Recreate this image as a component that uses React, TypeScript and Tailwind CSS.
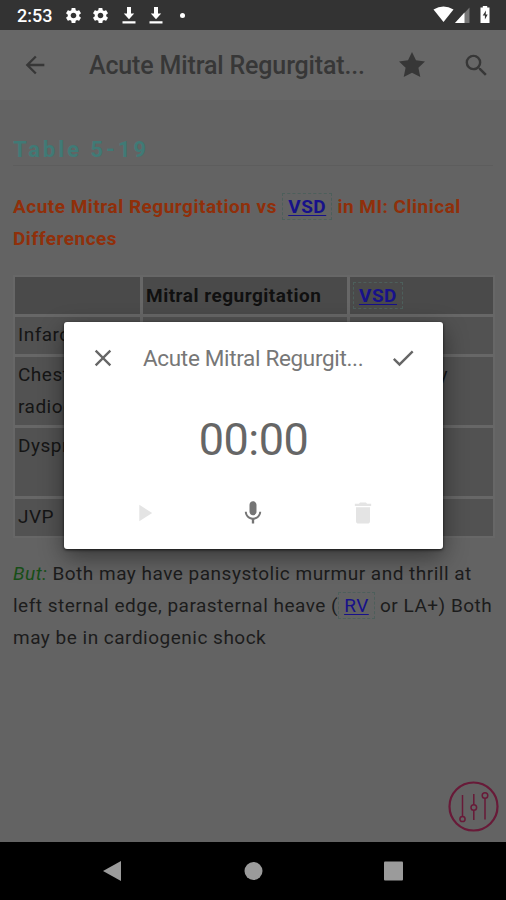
import type { ReactNode } from "react";
import {
  MdArrowBack,
  MdSearch,
  MdSettings,
  MdClose,
  MdCheck,
  MdPlayArrow,
  MdMic,
  MdDelete,
} from "react-icons/md";

const Term = ({ children }: { children: ReactNode }) => (
  <span className="border border-dashed border-[#4d5f5b] px-[5px] py-px text-[#17118a]">
    <span className="underline underline-offset-2 decoration-1">{children}</span>
  </span>
);

const DownloadIcon = () => (
  <svg width="14" height="18" viewBox="0 0 14 18" fill="white">
    <path d="M5 1h4v6.500h3.200L7 13.200 1.800 7.500H5zM0.500 15.300h13v2.200H0.500z" />
  </svg>
);

const StatusBar = () => (
  <div className="flex h-[30px] shrink-0 items-center bg-[#333333] text-white">
    <span className="ml-[17px] w-[47px] pt-px text-[18px] font-medium leading-none">2:53</span>
    <MdSettings className="h-[19px] w-[19px]" />
    <MdSettings className="ml-[8px] h-[19px] w-[19px]" />
    <div className="ml-[12px]">
      <DownloadIcon />
    </div>
    <div className="ml-[13px]">
      <DownloadIcon />
    </div>
    <span className="ml-[17px] h-[5px] w-[5px] rounded-full bg-white" />
    <svg className="ml-auto mr-[14px]" width="59" height="20" viewBox="0 0 59 20">
      <path d="M0.500 4.500Q10.500-1.500 20.500 4.500L10.500 17z" fill="white" />
      <path d="M36.500 2.500v15.500H22z" fill="#777777" />
      <path d="M31.500 7.500V18H22z" fill="white" />
      <path d="M47.500 2.500h2.300V1h4.400v1.500h2.300V18h-9z" fill="white" />
      <path d="M53 5.500l-3.300 5h2.200v4l2.800-5h-2z" fill="#333333" />
    </svg>
  </div>
);

const AppBar = () => (
  <div className="flex h-[70px] shrink-0 items-center bg-[#676767] text-[#373737]">
    <MdArrowBack className="ml-[21px] h-[28px] w-[28px]" />
    <h1 className="ml-[40px] w-[290px] whitespace-nowrap pt-px text-[25px] font-medium leading-none tracking-[-0.15px]">
      Acute Mitral Regurgitat...
    </h1>
    <svg className="ml-[20px]" width="26" height="26" viewBox="0 0 26 26" fill="currentColor">
      <path d="M13 0l4 8.300 9 1.200-6.600 6.300L21.300 25 13 20.800 4.700 25l1.900-9.200L0 9.500l9-1.200z" />
    </svg>
    <MdSearch className="ml-[37px] h-[29px] w-[29px]" />
  </div>
);

const rows = [
  { label: "Infarct", value: "", height: "h-[37px]" },
  { label: "Chest radiograph", value: "Pulmonary", height: "h-[68px]" },
  { label: "Dyspnoea", value: "", height: "h-[68px]" },
  { label: "JVP", value: "", height: "h-[37px]" },
];

const ClinicalTable = () => (
  <div className="-mr-[2px] mt-[20px] flex flex-col gap-[3px] border-2 border-[#676767] bg-[#676767] text-[#151515]">
    <div className="grid h-[37px] grid-cols-[125px_204px_1fr] gap-[3px] font-bold text-[#101010]">
      <div className="bg-[#4a4a4a]" />
      <div className="whitespace-nowrap bg-[#4a4a4a] pl-[3px] pt-[3px]">Mitral regurgitation</div>
      <div className="bg-[#4a4a4a] pl-[3px] pt-[3px]">
        <Term>VSD</Term>
      </div>
    </div>
    {rows.map((row) => (
      <div key={row.label} className={`grid grid-cols-[125px_204px_1fr] gap-[3px] ${row.height}`}>
        <div className="bg-[#525252] pl-[3px] pt-[2px]">{row.label}</div>
        <div className="bg-[#525252]" />
        <div className="bg-[#525252] pr-[45px] pt-[2px] text-right">{row.value}</div>
      </div>
    ))}
  </div>
);

const Article = () => (
  <div className="flex-1 bg-[#636363] px-[13px] pt-[35px] text-[19px] leading-[32px] tracking-[0.5px] text-[#1c1c1c]">
    <h2 className="border-b border-[#5d5d5d] text-[22px] font-bold leading-[30px] tracking-[3px] text-[#407a76]">
      Table 5-19
    </h2>
    <p className="mt-[25px] font-bold text-[#902f0a]">
      Acute Mitral Regurgitation vs <Term>VSD</Term> in MI: Clinical Differences
    </p>
    <ClinicalTable />
    <p className="mt-[20px] whitespace-nowrap">
      <em className="text-[#174e17]">But:</em> Both may have pansystolic murmur and thrill at
      <br />
      left sternal edge, parasternal heave (
      <Term>RV</Term> or LA+) Both
      <br />
      may be in cardiogenic shock
    </p>
  </div>
);

const RecorderDialog = () => (
  <div className="absolute left-[64px] top-[322px] flex h-[227px] w-[379px] flex-col rounded-[3px] bg-white text-[#666666] shadow-[0_8px_24px_rgba(0,0,0,0.45),0_1px_3px_rgba(0,0,0,0.7)]">
    <div className="flex h-[72px] items-center">
      <MdClose className="ml-[25px] h-[28px] w-[28px]" />
      <h3 className="ml-[26px] w-[222px] whitespace-nowrap text-[22.500px] leading-none tracking-[-0.33px] text-[#777777]">
        Acute Mitral Regurgit...
      </h3>
      <MdCheck className="ml-[24px] h-[28px] w-[28px]" />
    </div>
    <div className="flex h-[90px] items-center justify-center text-[45px] leading-none tracking-[-0.5px]">
      00:00
    </div>
    <div className="flex h-[57px] items-center">
      <MdPlayArrow className="ml-[66px] h-[28px] w-[28px] text-[#e4e4e4]" />
      <MdMic className="ml-[81px] h-[28px] w-[28px] text-[#757575]" />
      <MdDelete className="ml-[82px] h-[28px] w-[28px] text-[#e4e4e4]" />
    </div>
  </div>
);

const EqualizerButton = () => (
  <svg
    className="absolute left-[448px] top-[781px]"
    width="51"
    height="51"
    viewBox="0 0 51 51"
    fill="none"
    stroke="#681a38"
    strokeWidth="1.5"
  >
    <circle cx="25.500" cy="25.500" r="24" strokeWidth="2.200" />
    <path d="M14.500 14v21M25.800 13v10.500M25.800 29.500v9.500M37 17.500v21" />
    <circle cx="14.500" cy="38" r="2.600" />
    <circle cx="25.800" cy="26.500" r="2.800" />
    <circle cx="37" cy="14.500" r="2.800" />
  </svg>
);

const NavBar = () => (
  <div className="flex h-[58px] shrink-0 items-center justify-center bg-black">
    <svg width="302" height="22" viewBox="0 0 302 22" fill="#9b9b9b">
      <path d="M1 11L19 1v20z" />
      <circle cx="151.500" cy="11" r="9" />
      <rect x="282" y="1.500" width="19" height="19" rx="1" />
    </svg>
  </div>
);

const App = () => {
  return (
    <main className="relative flex h-[900px] w-[506px] flex-col overflow-hidden font-['Roboto',sans-serif]">
      <StatusBar />
      <AppBar />
      <Article />
      <NavBar />
      <EqualizerButton />
      <RecorderDialog />
    </main>
  );
};
export default App;
